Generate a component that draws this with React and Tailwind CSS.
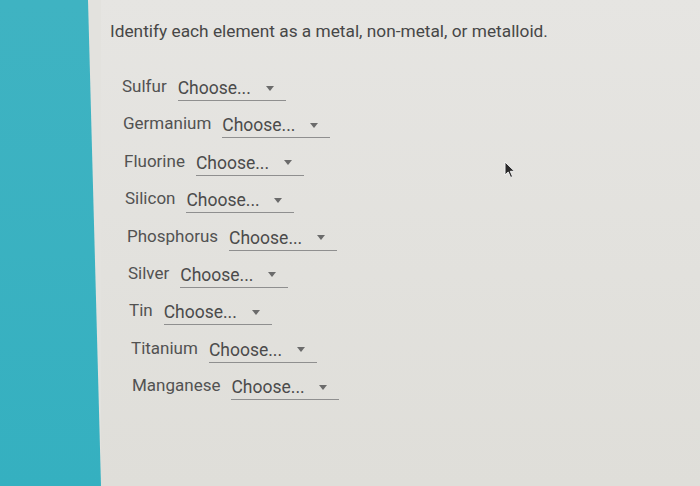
import React from 'react';

const elements = [
  { name: 'Sulfur', indent: 'ml-[21px]' },
  { name: 'Germanium', indent: 'ml-[22px]' },
  { name: 'Fluorine', indent: 'ml-[23px]' },
  { name: 'Silicon', indent: 'ml-[24px]' },
  { name: 'Phosphorus', indent: 'ml-[26px]' },
  { name: 'Silver', indent: 'ml-[27px]' },
  { name: 'Tin', indent: 'ml-[28px]' },
  { name: 'Titanium', indent: 'ml-[30px]' },
  { name: 'Manganese', indent: 'ml-[31px]' },
];

function Caret() {
  return (
    <svg width="8" height="5" viewBox="0 0 8 5" className="shrink-0">
      <path d="M0 0 L8 0 L4 5 Z" fill="#6b6b6b" />
    </svg>
  );
}

function Cursor() {
  return (
    <svg width="13" height="18" viewBox="0 0 13 18" className="absolute left-[504px] top-[161px]">
      <path d="M1 1 L1 14 L4.2 11 L6.6 16.5 L8.6 15.6 L6.3 10.3 L10.6 10.3 Z" fill="#2a2a2a" stroke="#f2f2f2" strokeWidth="1" />
    </svg>
  );
}

export default function App() {
  return (
    <div className="relative w-[700px] h-[486px] overflow-hidden bg-[#e3e2de] flex font-['Roboto',sans-serif]">
      <div className="w-[101px] h-full shrink-0 bg-gradient-to-b from-[#3fb3c2] to-[#35b0c0] [clip-path:polygon(0_0,88px_0,101px_100%,0_100%)]" />
      <div className="flex-1 pt-[20px] bg-gradient-to-b from-[#e6e5e2] to-[#dfded9]">
        <div className="ml-[9px] text-[17.3px] leading-[22px] text-[#474747]">
          Identify each element as a metal, non-metal, or metalloid.
        </div>
        <div className="mt-[33px] flex flex-col">
          {elements.map((el) => (
            <div key={el.name} className={`h-[37.4px] flex items-start gap-[11px] ${el.indent}`}>
              <span className="text-[17px] leading-[22px] text-[#525252]">{el.name}</span>
              <div className="w-[108px] h-[26px] pt-[2px] border-b border-[#8f8f8f] flex items-start justify-between pr-[12px]">
                <span className="text-[17.5px] leading-[22px] text-[#4b4b4b]">Choose...</span>
                <span className="h-[22px] flex items-center"><Caret /></span>
              </div>
            </div>
          ))}
        </div>
      </div>
      <Cursor />
    </div>
  );
}
